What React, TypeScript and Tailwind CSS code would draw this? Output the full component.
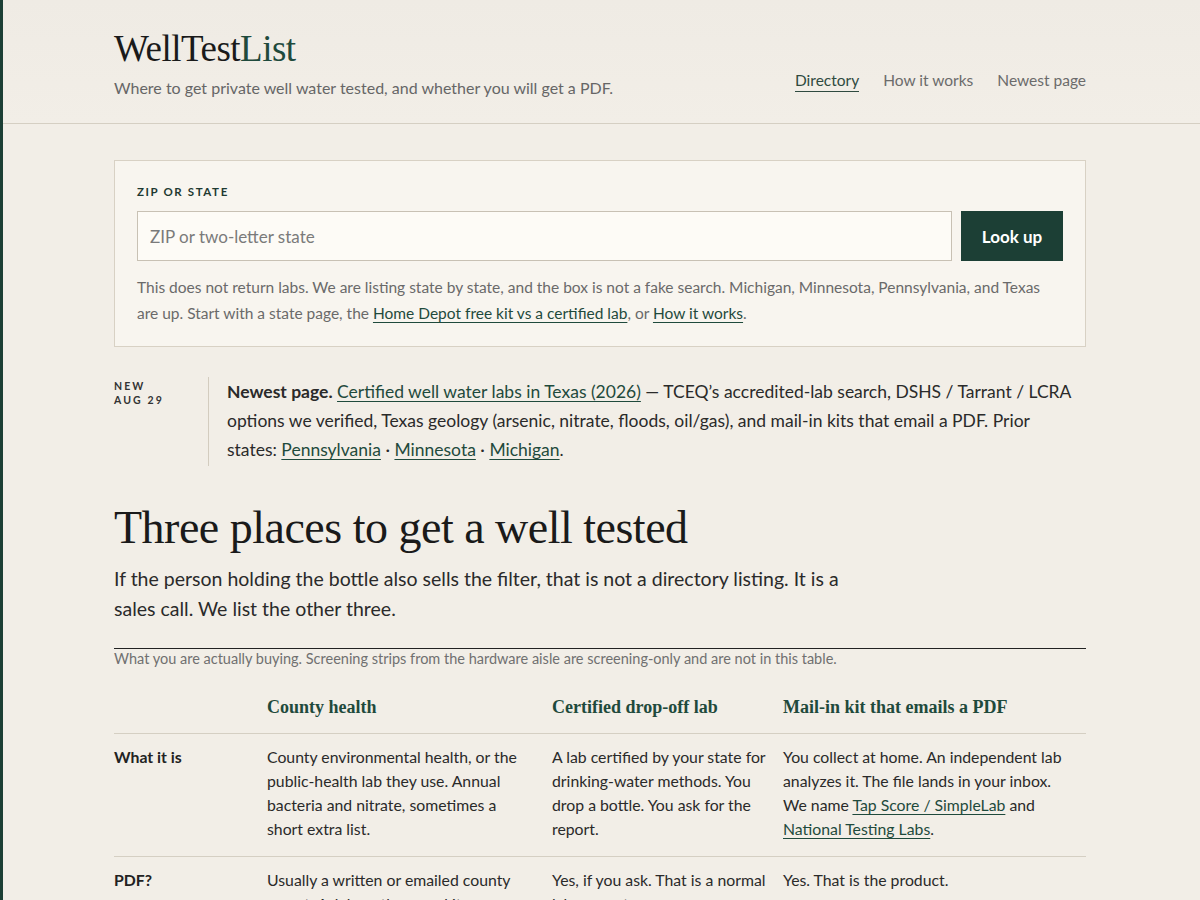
import React from 'react';

const sans = "font-['Lato','Noto_Sans',sans-serif]";
const serif = "font-['Liberation_Serif','DejaVu_Serif',serif]";

function A({ children }: { children: React.ReactNode }) {
    return (
        <a href="#" className="whitespace-nowrap text-[#1f4a3c] underline decoration-[#1f4a3c] decoration-1 underline-offset-[3px]">
            {children}
        </a>
    );
}

const rows = [
    {
        label: 'What it is',
        cells: [
            <>County environmental health, or the public-health lab they use. Annual bacteria and nitrate, sometimes a short extra list.</>,
            <>A lab certified by your state for drinking-water methods. You drop a bottle. You ask for the report.</>,
            <>
                You collect at home. An independent lab analyzes it. The file lands in your inbox. We name <A>Tap Score / SimpleLab</A> and{' '}
                <A>National Testing Labs</A>.
            </>,
        ],
    },
    {
        label: 'PDF?',
        cells: [
            <>Usually a written or emailed county report. Ask how they send it.</>,
            <>Yes, if you ask. That is a normal lab request.</>,
            <>Yes. That is the product.</>,
        ],
    },
];

const colPad = ['pr-[20px]', 'pr-[12px]', 'pr-[20px]'];

export default function App() {
    return (
        <div className={`min-h-screen bg-[#f2eee7] text-[#222] ${sans}`}>
            {/* site stripe */}
            <div className="fixed left-0 top-0 h-full w-[3px] bg-[#1c3f35] z-10"></div>

            <header className="border-b border-[#d5cfc3] bg-gradient-to-b from-[#efebe4] to-[#f2eee7]">
                <div className="mx-auto w-[972px] flex items-end justify-between pt-[28px] pb-[24px]">
                    <div>
                        <div className={`${serif} text-[37px] leading-[42px] tracking-[-0.5px] text-[#1a1a1a]`}>
                            WellTest<span className="text-[#1f4a3c]">List</span>
                        </div>
                        <p className="mt-[7px] text-[16px] leading-[22px] text-[#666]">
                            Where to get private well water tested, and whether you will get a PDF.
                        </p>
                    </div>
                    <nav className="flex gap-6 text-[15.5px] text-[#6b6b6b] pb-[7px]">
                        <a href="#" className="text-[#2f4a40] border-b border-[#2f4a40] leading-[21px]">Directory</a>
                        <a href="#" className="leading-[20px]">How it works</a>
                        <a href="#" className="leading-[20px]">Newest page</a>
                    </nav>
                </div>
            </header>

            <main className="mx-auto w-[972px] pt-[36px]">
                <section className="border border-[#d8d1c4] bg-[#f8f5ef] px-[22px] pt-[22px] pb-[20px]">
                    <label className="block text-[11.5px] font-bold tracking-[0.14em] text-[#1f3a32]">ZIP OR STATE</label>
                    <div className="mt-[11px] flex gap-[9px]">
                        <input
                            placeholder="ZIP or two-letter state"
                            className="flex-1 h-[50px] border border-[#c8c1b4] bg-[#fdfbf6] px-[12px] text-[17px] placeholder-[#7a7a7a] outline-none"
                        />
                        <button className="w-[102px] h-[50px] bg-[#1c3f35] text-white text-[17px] font-bold">Look up</button>
                    </div>
                    <p className="mt-[13px] text-[15.5px] leading-[26px] text-[#6a6a6a]">
                        This does not return labs. We are listing state by state, and the box is not a fake search. Michigan, Minnesota, Pennsylvania, and Texas
                        are up. Start with a state page, the <A>Home Depot free kit vs a certified lab</A>, or <A>How it works</A>.
                    </p>
                </section>

                <section className="mt-[30px] flex">
                    <div className="w-[94px] shrink-0 pt-[2px] text-[10.5px] font-bold tracking-[0.2em] leading-[14px] text-[#333]">
                        <div>NEW</div>
                        <div>AUG 29</div>
                    </div>
                    <div className="border-l border-[#d3ccbf] pl-[18px] pr-[10px] pb-[2px] text-[17.5px] leading-[29px] text-[#2a2a2a]">
                        <strong className="font-bold">Newest page.</strong> <A>Certified well water labs in Texas (2026)</A> — TCEQ’s accredited-lab
                        search, DSHS / Tarrant / LCRA options we verified, Texas geology (arsenic, nitrate, floods, oil/gas), and mail-in kits that email a
                        PDF. Prior states: <A>Pennsylvania</A> · <A>Minnesota</A> · <A>Michigan</A>.
                    </div>
                </section>

                <h1 className={`${serif} mt-[36px] text-[46px] leading-[52px] tracking-[-0.5px] text-[#1a1a1a]`}>Three places to get a well tested</h1>
                <p className="mt-[10px] w-[740px] text-[19.5px] leading-[30px] text-[#2a2a2a]">
                    If the person holding the bottle also sells the filter, that is not a directory listing. It is a sales call. We list the other three.
                </p>

                <div className="mt-[24px] border-t border-[#222] pt-[1px]">
                    <p className="text-[14.5px] leading-[18px] text-[#707070]">
                        What you are actually buying. Screening strips from the hardware aisle are screening-only and are not in this table.
                    </p>
                    <table className="mt-[17px] w-full border-collapse text-left">
                        <thead>
                            <tr className="border-b border-[#d5cfc3]">
                                <th className="w-[153px]"></th>
                                {['County health', 'Certified drop-off lab', 'Mail-in kit that emails a PDF'].map((h, i) => (
                                    <th
                                        key={h}
                                        className={`${serif} ${i === 0 ? 'w-[285px]' : i === 1 ? 'w-[231px]' : ''} pb-[14px] pt-[10px] pr-3 text-[18px] font-bold leading-[24px] text-[#1f4a3c]`}
                                    >
                                        {h}
                                    </th>
                                ))}
                            </tr>
                        </thead>
                        <tbody>
                            {rows.map((r) => (
                                <tr key={r.label} className="border-b border-[#d5cfc3] align-top">
                                    <td className="pt-[11px] pb-[15px] pr-3 text-[15.8px] font-bold leading-[24px] text-[#222]">{r.label}</td>
                                    {r.cells.map((c, i) => (
                                        <td key={i} className={`pt-[11px] pb-[15px] ${colPad[i]} text-[15.8px] leading-[24px] text-[#2a2a2a]`}>
                                            {c}
                                        </td>
                                    ))}
                                </tr>
                            ))}
                        </tbody>
                    </table>
                </div>
                <div className="h-20"></div>
            </main>
        </div>
    );
}
